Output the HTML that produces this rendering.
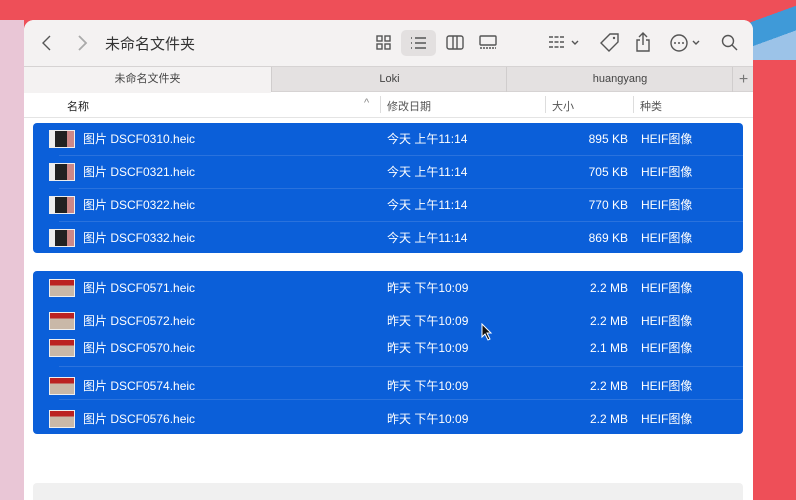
<!DOCTYPE html><html><head><meta charset="utf-8"><style>
body{margin:0;width:796px;height:491px;overflow:hidden;background:#ee4f58;font-family:"Liberation Sans","Noto Sans CJK SC",sans-serif;position:relative}
.abs{position:absolute}
.win{left:24px;top:20px;width:729px;height:480px;background:#fff;border-radius:10px 10px 0 0;overflow:hidden}
.tb{left:0;top:0;width:729px;height:46px;background:#f4f2f2}
.tabs{left:0;top:46px;width:729px;height:26px;background:#e4e1e1;border-top:1px solid #d6d3d3;border-bottom:1px solid #d6d3d3;box-sizing:border-box}
.tab{position:absolute;top:0;height:25px;line-height:25px;text-align:center;font-size:11px;color:#444;border-left:1px solid #d0cdcd}
.hdr{left:0;top:72px;width:729px;height:25px;border-bottom:1px solid #e4e4e4;font-size:11px;color:#555}
.grp{left:9px;width:710px;background:#0b5fd9;border-radius:4px}
.row{position:absolute;left:0;width:710px;height:20px;font-size:12px;color:#fff;line-height:20px}
.row span{position:absolute}
.sep{position:absolute;left:26px;right:0;height:1px;background:#2a72dd}
.th{position:absolute;left:16px;top:1px;width:26px;height:18px;background:linear-gradient(#b22 0 35%,#c9b8a8 35%);border:1px solid #eee;box-sizing:border-box}
.th.d{background:linear-gradient(90deg,#eee 0 20%,#222 20% 70%,#c88 70%)}
.ic{stroke:#555;fill:none;stroke-width:1.4}
</style></head><body>
<div class="abs" style="left:0;top:20px;width:24px;height:480px;background:#e9c6d6"></div>
<div class="abs" style="left:690px;top:0;width:106px;height:60px;background:linear-gradient(160deg,transparent 0 45%,#3f9ad8 45% 70%,#9cc3e8 70%)"></div>
<div class="abs win">
 <div class="abs tb">
  <svg class="abs" style="left:16px;top:14px" width="60" height="18"><path class="ic" d="M10 2L3 9l7 7" stroke-width="1.8"/><path d="M39 2l7 7-7 7" fill="none" stroke="#aaa" stroke-width="1.8"/></svg>
  <div class="abs" style="left:81px;top:13px;font-size:15px;color:#333">未命名文件夹</div>
  <svg class="abs" style="left:352px;top:15px" width="16" height="16"><rect class="ic" x="1" y="1" width="5" height="5"/><rect class="ic" x="9" y="1" width="5" height="5"/><rect class="ic" x="1" y="9" width="5" height="5"/><rect class="ic" x="9" y="9" width="5" height="5"/></svg>
  <div class="abs" style="left:377px;top:10px;width:35px;height:26px;background:#e3e0e0;border-radius:5px"></div>
  <svg class="abs" style="left:386px;top:16px" width="18" height="14"><path class="ic" d="M1 2h1M5 2h11M1 7h1M5 7h11M1 12h1M5 12h11"/></svg>
  <svg class="abs" style="left:422px;top:15px" width="20" height="16"><rect class="ic" x="1" y="1" width="16" height="13" rx="2"/><path class="ic" d="M7 1v13M11 1v13"/></svg>
  <svg class="abs" style="left:455px;top:15px" width="20" height="16"><rect class="ic" x="1" y="1" width="16" height="9" rx="1"/><path class="ic" d="M1 13h16" stroke-dasharray="2 1"/></svg>
  <svg class="abs" style="left:524px;top:15px" width="36" height="16"><path class="ic" d="M1 2h16M1 7h16M1 12h16" stroke-dasharray="4 1.5"/><path class="ic" d="M24 6l3 3 3-3"/></svg>
  <svg class="abs" style="left:575px;top:12px" width="22" height="22"><path class="ic" d="M11 2h8v8L10 19 2 11z"/><circle cx="15" cy="6" r="1.2" fill="#555"/></svg>
  <svg class="abs" style="left:611px;top:11px" width="16" height="22"><path class="ic" d="M8 2v12M4 6l4-4 4 4M5 9H2v11h12V9h-3"/></svg>
  <svg class="abs" style="left:645px;top:13px" width="36" height="20"><circle class="ic" cx="10" cy="10" r="8"/><circle cx="6" cy="10" r="1" fill="#555"/><circle cx="10" cy="10" r="1" fill="#555"/><circle cx="14" cy="10" r="1" fill="#555"/><path class="ic" d="M24 8l3 3 3-3"/></svg>
  <svg class="abs" style="left:697px;top:14px" width="18" height="18"><circle class="ic" cx="7" cy="7" r="5.5"/><path class="ic" d="M11 11l5 5"/></svg>
 </div>
 <div class="abs tabs">
  <div class="tab" style="left:0;width:247px;background:#f4f2f2;border:none;height:26px">未命名文件夹</div>
  <div class="tab" style="left:247px;width:235px">Loki</div>
  <div class="tab" style="left:482px;width:226px">huangyang</div>
  <div class="tab" style="left:708px;width:21px;font-size:16px;color:#777">+</div>
 </div>
 <div class="abs hdr">
  <span class="abs" style="left:43px;top:6px;color:#222">名称</span>
  <span class="abs" style="left:340px;top:5px;color:#888">^</span>
  <div class="abs" style="left:356px;top:4px;height:17px;border-left:1px solid #ddd"></div>
  <span class="abs" style="left:363px;top:6px">修改日期</span>
  <div class="abs" style="left:521px;top:4px;height:17px;border-left:1px solid #ddd"></div>
  <span class="abs" style="left:528px;top:6px">大小</span>
  <div class="abs" style="left:609px;top:4px;height:17px;border-left:1px solid #ddd"></div>
  <span class="abs" style="left:616px;top:6px">种类</span>
 </div>
 <div class="abs grp" style="top:103px;height:130px">
  <div class="sep" style="top:32px"></div><div class="sep" style="top:65px"></div><div class="sep" style="top:98px"></div>
  <div class="row" style="top:6px"><div class="th d"></div><span style="left:50px">图片 DSCF0310.heic</span><span style="left:354px">今天 上午11:14</span><span style="right:115px">895 KB</span><span style="left:608px">HEIF图像</span></div>
  <div class="row" style="top:39px"><div class="th d"></div><span style="left:50px">图片 DSCF0321.heic</span><span style="left:354px">今天 上午11:14</span><span style="right:115px">705 KB</span><span style="left:608px">HEIF图像</span></div>
  <div class="row" style="top:72px"><div class="th d"></div><span style="left:50px">图片 DSCF0322.heic</span><span style="left:354px">今天 上午11:14</span><span style="right:115px">770 KB</span><span style="left:608px">HEIF图像</span></div>
  <div class="row" style="top:105px"><div class="th d"></div><span style="left:50px">图片 DSCF0332.heic</span><span style="left:354px">今天 上午11:14</span><span style="right:115px">869 KB</span><span style="left:608px">HEIF图像</span></div>
 </div>
 <div class="abs grp" style="top:251px;height:163px">
  <div class="sep" style="top:95px"></div><div class="sep" style="top:128px"></div>
  <div class="row" style="top:7px"><div class="th"></div><span style="left:50px">图片 DSCF0571.heic</span><span style="left:354px">昨天 下午10:09</span><span style="right:115px">2.2 MB</span><span style="left:608px">HEIF图像</span></div>
  <div class="row" style="top:40px"><div class="th"></div><span style="left:50px">图片 DSCF0572.heic</span><span style="left:354px">昨天 下午10:09</span><span style="right:115px">2.2 MB</span><span style="left:608px">HEIF图像</span></div>
  <div class="row" style="top:67px"><div class="th"></div><span style="left:50px">图片 DSCF0570.heic</span><span style="left:354px">昨天 下午10:09</span><span style="right:115px">2.1 MB</span><span style="left:608px">HEIF图像</span></div>
  <div class="row" style="top:105px"><div class="th"></div><span style="left:50px">图片 DSCF0574.heic</span><span style="left:354px">昨天 下午10:09</span><span style="right:115px">2.2 MB</span><span style="left:608px">HEIF图像</span></div>
  <div class="row" style="top:138px"><div class="th"></div><span style="left:50px">图片 DSCF0576.heic</span><span style="left:354px">昨天 下午10:09</span><span style="right:115px">2.2 MB</span><span style="left:608px">HEIF图像</span></div>
 </div>
 <div class="abs" style="left:9px;top:463px;width:710px;height:20px;background:#f0f0f0;border-radius:4px"></div>
</div>
<svg class="abs" style="left:481px;top:323px" width="12" height="18"><path d="M1 1v13l3-3 3 6 2-1-3-6h4z" fill="#111" stroke="#fff" stroke-width="1"/></svg>
</body></html>
